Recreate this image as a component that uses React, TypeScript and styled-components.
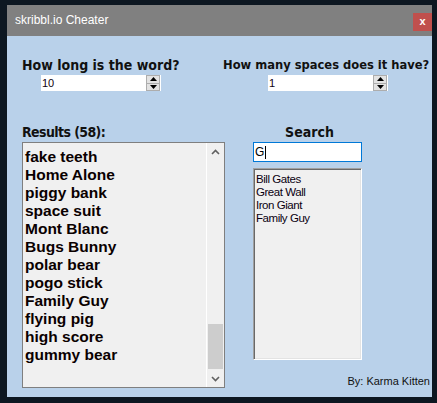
import React from "react";
import styled, { createGlobalStyle } from "styled-components";

const Global = createGlobalStyle`
  html, body { margin: 0; padding: 0; }
  body {
    background: #0d1721;
    width: 437px;
    height: 403px;
    overflow: hidden;
  }
  #root { padding: 5px 0 0 7px; }
`;

const Window = styled.div`
  width: 425px;
  height: 392px;
  display: flex;
  flex-direction: column;
  background: #b9d1ea;
`;

const TitleBar = styled.div`
  height: 31px;
  flex: none;
  background: #808080;
  display: flex;
  align-items: flex-start;
  justify-content: space-between;
  padding-left: 8px;
`;

const TitleText = styled.span`
  font-family: "Liberation Sans", Arial, sans-serif;
  font-size: 12px;
  color: #ffffff;
  line-height: 31px;
`;

const CloseButton = styled.div`
  width: 19px;
  height: 18px;
  margin-top: 8px;
  background: #c0504d;
  color: #ffffff;
  font-family: "Liberation Sans", Arial, sans-serif;
  font-weight: bold;
  font-size: 11px;
  line-height: 17px;
  text-align: center;
`;

const Body = styled.div`
  flex: 1;
  display: flex;
  flex-direction: column;
  padding: 21px 0 9px 15px;
`;

const TopRow = styled.div`
  display: flex;
  align-items: flex-start;
`;

const Group = styled.div<{ $width?: number; $indent: number }>`
  display: flex;
  flex-direction: column;
  ${(p) => (p.$width ? `width: ${p.$width}px;` : "")}
  & > :last-child { margin-left: ${(p) => p.$indent}px; }
`;

const Label = styled.div<{ $size: number; $spacing?: number }>`
  font-family: "DejaVu Sans Condensed", "DejaVu Sans", Verdana, sans-serif;
  font-stretch: condensed;
  font-weight: bold;
  font-size: ${(p) => p.$size}px;
  letter-spacing: ${(p) => p.$spacing ?? 0}px;
  line-height: 16px;
  height: 16px;
  color: #111111;
  white-space: nowrap;
`;

const Spin = styled.div`
  width: 120px;
  height: 16px;
  margin-top: 2px;
  background: #ffffff;
  display: flex;
  align-items: stretch;
`;

const SpinValue = styled.div`
  flex: 1;
  padding-left: 1px;
  font-family: "Liberation Sans", Arial, sans-serif;
  font-size: 11px;
  line-height: 16px;
  color: #100010;
`;

const SpinButtons = styled.div`
  width: 14px;
  margin-right: 1px;
  display: flex;
  flex-direction: column;
`;

const SpinButton = styled.div<{ $down?: boolean }>`
  flex: 1;
  background: #e3e3e3;
  border: 1px solid #adadad;
  ${(p) => (p.$down ? "border-top: none;" : "")}
  display: flex;
  align-items: center;
  justify-content: center;
  svg { display: block; }
`;

const BottomRow = styled.div`
  display: flex;
  align-items: stretch;
  margin-top: 33px;
  flex: 1;
`;

const LeftColumn = styled.div`
  width: 203px;
  display: flex;
  flex-direction: column;
`;

const ListBox = styled.div`
  margin-top: 2px;
  flex: 1;
  border: 1px solid #7f7f7f;
  background: #f0f0f0;
  display: flex;
  min-height: 0;
`;

const Items = styled.div`
  flex: 1;
  padding: 5px 0 0 2px;
  overflow: hidden;
`;

const Item = styled.div`
  font-family: "Liberation Sans", Arial, sans-serif;
  font-weight: bold;
  font-size: 15.5px;
  line-height: 18px;
  height: 18px;
  color: #0a0000;
  white-space: nowrap;
`;

const ScrollBar = styled.div`
  width: 17px;
  border-left: 1px solid #ffffff;
  background: #f0f0f0;
  display: flex;
  flex-direction: column;
`;

const ScrollArrow = styled.div`
  height: 17px;
  flex: none;
  display: flex;
  align-items: center;
  justify-content: center;
  svg { display: block; }
`;

const Thumb = styled.div`
  margin: auto 1px 1px 1px;
  height: 45px;
  background: #cdcdcd;
`;

const RightColumn = styled.div`
  flex: 1;
  margin-left: 28px;
  padding-right: 2px;
  display: flex;
  flex-direction: column;
`;

const SearchBlock = styled.div`
  width: 109px;
  display: flex;
  flex-direction: column;
  align-items: stretch;
`;

const CenterLabel = styled(Label)`
  text-align: center;
  margin-right: -4px;
`;

const SearchInput = styled.div`
  margin-top: 2px;
  height: 20px;
  box-sizing: border-box;
  border: 1px solid #0078d7;
  background: #ffffff;
  padding-left: 1px;
  display: flex;
  align-items: center;
  font-family: "Liberation Sans", Arial, sans-serif;
  font-size: 12px;
  color: #000000;
`;

const Caret = styled.span`
  display: inline-block;
  width: 1px;
  height: 13px;
  margin-left: 1px;
  background: #000000;
`;

const MatchList = styled.div`
  margin-top: 6px;
  height: 192px;
  box-sizing: border-box;
  background: #f0f0f0;
  border-style: solid;
  border-width: 1px;
  border-color: #a0a0a0 #ffffff #ffffff #a0a0a0;
  box-shadow: inset 1px 1px 0 #696969, inset -1px -1px 0 #e3e3e3;
  padding: 4px 0 0 2px;
`;

const Match = styled.div`
  font-family: "Liberation Sans", Arial, sans-serif;
  font-size: 11.5px;
  letter-spacing: -0.45px;
  line-height: 13px;
  height: 13px;
  color: #0a0010;
  white-space: nowrap;
`;

const Credit = styled.div`
  margin-top: auto;
  align-self: flex-end;
  font-family: "Liberation Sans", Arial, sans-serif;
  font-size: 11px;
  line-height: 13px;
  color: #111111;
`;

const Up = () => (
  <svg width="7" height="4" viewBox="0 0 7 4">
    <path d="M0 4 L3.5 0 L7 4 Z" fill="#000" />
  </svg>
);
const Down = () => (
  <svg width="7" height="4" viewBox="0 0 7 4">
    <path d="M0 0 L3.5 4 L7 0 Z" fill="#000" />
  </svg>
);

const ChevUp = () => (
  <svg width="9" height="6" viewBox="0 0 9 6">
    <path d="M1 5 L4.5 1.5 L8 5" stroke="#606060" strokeWidth="1.6" fill="none" />
  </svg>
);
const ChevDown = () => (
  <svg width="9" height="6" viewBox="0 0 9 6">
    <path d="M1 1 L4.5 4.5 L8 1" stroke="#606060" strokeWidth="1.6" fill="none" />
  </svg>
);

const NumberBox = ({ value }: { value: string }) => (
  <Spin>
    <SpinValue>{value}</SpinValue>
    <SpinButtons>
      <SpinButton>
        <Up />
      </SpinButton>
      <SpinButton $down>
        <Down />
      </SpinButton>
    </SpinButtons>
  </Spin>
);

const results = [
  "fake teeth",
  "Home Alone",
  "piggy bank",
  "space suit",
  "Mont Blanc",
  "Bugs Bunny",
  "polar bear",
  "pogo stick",
  "Family Guy",
  "flying pig",
  "high score",
  "gummy bear",
];

const matches = ["Bill Gates", "Great Wall", "Iron Giant", "Family Guy"];

export default function App() {
  return (
    <>
      <Global />
      <Window>
        <TitleBar>
          <TitleText>skribbl.io Cheater</TitleText>
          <CloseButton>x</CloseButton>
        </TitleBar>
        <Body>
          <TopRow>
            <Group $width={201} $indent={19}>
              <Label $size={14}>How long is the word?</Label>
              <NumberBox value="10" />
            </Group>
            <Group $indent={45}>
              <Label $size={12.8}>How many spaces does it have?</Label>
              <NumberBox value="1" />
            </Group>
          </TopRow>
          <BottomRow>
            <LeftColumn>
              <Label $size={14} $spacing={-0.6}>
                Results (58):
              </Label>
              <ListBox>
                <Items>
                  {results.map((r) => (
                    <Item key={r}>{r}</Item>
                  ))}
                </Items>
                <ScrollBar>
                  <ScrollArrow>
                    <ChevUp />
                  </ScrollArrow>
                  <Thumb />
                  <ScrollArrow>
                    <ChevDown />
                  </ScrollArrow>
                </ScrollBar>
              </ListBox>
            </LeftColumn>
            <RightColumn>
              <SearchBlock>
                <CenterLabel $size={14}>Search</CenterLabel>
                <SearchInput>
                  G<Caret />
                </SearchInput>
                <MatchList>
                  {matches.map((m) => (
                    <Match key={m}>{m}</Match>
                  ))}
                </MatchList>
              </SearchBlock>
              <Credit>By: Karma Kitten</Credit>
            </RightColumn>
          </BottomRow>
        </Body>
      </Window>
    </>
  );
}
